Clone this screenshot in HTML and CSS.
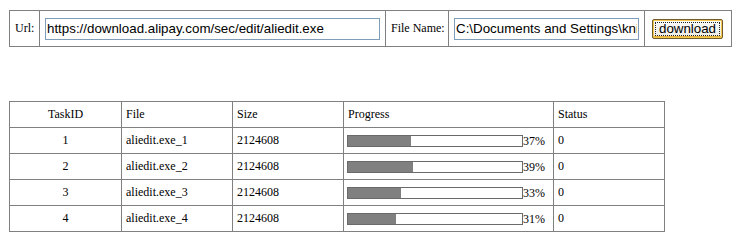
FILE: index.html
```html
<!DOCTYPE html>
<html>
<head>
<meta charset="utf-8">
<title>Download</title>
<link rel="stylesheet" href="styles.css">
</head>
<body>
<table class="form-table">
  <colgroup>
    <col class="c-url-lbl"><col class="c-url"><col class="c-file-lbl"><col class="c-file"><col class="c-btn">
  </colgroup>
  <tr>
    <td class="lbl">Url:</td>
    <td class="field"><input class="text-input url-input" type="text" value="https://download.alipay.com/sec/edit/aliedit.exe"></td>
    <td class="lbl">File Name:</td>
    <td class="field"><input class="text-input file-input" type="text" value="C:\Documents and Settings\knight\Desktop\aliedit.exe"></td>
    <td class="btn-cell"><button class="dl-btn" type="button"><span class="focus-ring">download</span></button></td>
  </tr>
</table>

<table class="task-table">
  <colgroup>
    <col class="c-id"><col class="c-name"><col class="c-size"><col class="c-prog"><col class="c-status">
  </colgroup>
  <tr>
    <th class="center">TaskID</th><th>File</th><th>Size</th><th>Progress</th><th>Status</th>
  </tr>
  <tr>
    <td class="center">1</td><td>aliedit.exe_1</td><td>2124608</td>
    <td class="prog"><span class="bar"><span class="fill" style="width:63px"></span></span><span class="pct">37%</span></td>
    <td>0</td>
  </tr>
  <tr>
    <td class="center">2</td><td>aliedit.exe_2</td><td>2124608</td>
    <td class="prog"><span class="bar"><span class="fill" style="width:65px"></span></span><span class="pct">39%</span></td>
    <td>0</td>
  </tr>
  <tr>
    <td class="center">3</td><td>aliedit.exe_3</td><td>2124608</td>
    <td class="prog"><span class="bar"><span class="fill" style="width:53px"></span></span><span class="pct">33%</span></td>
    <td>0</td>
  </tr>
  <tr>
    <td class="center">4</td><td>aliedit.exe_4</td><td>2124608</td>
    <td class="prog"><span class="bar"><span class="fill" style="width:48px"></span></span><span class="pct">31%</span></td>
    <td>0</td>
  </tr>
</table>
</body>
</html>
```
FILE: styles.css
```css
html, body {
  background: #fff;
}
body {
  margin: 0;
  padding: 10px 0 0 9px;
  font-family: "Liberation Serif", "Times New Roman", serif;
  font-size: 12px;
  color: #000;
}
table {
  border-collapse: collapse;
  table-layout: fixed;
}
td, th {
  border: 1px solid #808080;
  padding: 0 4px;
  font-weight: normal;
  text-align: left;
  vertical-align: middle;
  white-space: nowrap;
  overflow: hidden;
}

/* top form */
.form-table {
  width: 723px;
}
.form-table tr {
  height: 36px;
}
.c-url-lbl { width: 30px; }
.c-url { width: 346px; }
.c-file-lbl { width: 63px; }
.c-file { width: 196px; }
.c-btn { width: 87px; }
.form-table .lbl,
.form-table .field {
  padding: 0 5px;
}
.form-table .btn-cell {
  padding: 0 7px;
}
.text-input {
  box-sizing: border-box;
  display: block;
  height: 22px;
  margin: 0;
  padding: 0 1px;
  border: 1px solid #7f9db9;
  background: #fff;
  font-family: "Liberation Sans", Arial, sans-serif;
  font-size: 13.33px;
  color: #000;
  outline: none;
}
.url-input { width: 335px; }
.file-input { width: 185px; }
.dl-btn {
  box-sizing: border-box;
  display: block;
  width: 71px;
  height: 20px;
  margin: 0;
  padding: 2px;
  border: 1px solid #6f5c2a;
  border-radius: 2px;
  background: linear-gradient(#fbfbf8, #ecebe4);
  box-shadow: inset 0 0 0 1px #f4c84e, inset 0 -1px 0 1px #e6b23a;
  font-family: "Liberation Sans", Arial, sans-serif;
  font-size: 13.33px;
  color: #000;
}
.focus-ring {
  display: block;
  height: 100%;
  box-sizing: border-box;
  border: 1px dotted #222;
  line-height: 12px;
}

/* task table */
.task-table {
  margin-top: 54px;
  width: 656px;
}
.task-table tr {
  height: 26px;
}
.c-id { width: 112px; }
.c-name { width: 111px; }
.c-size { width: 111px; }
.c-prog { width: 210px; }
.c-status { width: 111px; }
.task-table .center {
  text-align: center;
}
.task-table .prog {
  padding-left: 3px;
}
.bar {
  display: inline-block;
  vertical-align: middle;
  box-sizing: border-box;
  width: 176px;
  height: 12px;
  border: 1px solid #6a6a6a;
  background: #fff;
}
.fill {
  display: block;
  height: 100%;
  background: #808080;
}
.pct {
  vertical-align: middle;
}
```
